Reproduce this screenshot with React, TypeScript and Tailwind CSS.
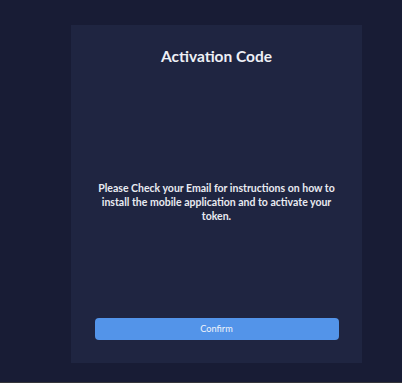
export default function App() {
  return (
    <div className="flex h-[383px] w-[402px] flex-col bg-[#181c35] font-['Lato',sans-serif]">
      <div className="flex flex-1 justify-start pl-[71px] pt-[25px]">
        {/* Card */}
        <div className="flex h-[338px] w-[291px] flex-col items-center bg-[#1f2541] px-4">
          <h1 className="mt-[20px] text-[15.5px] font-bold text-[#eef0f6]">Activation Code</h1>
          <p className="mt-[113px] text-center text-[10.5px] font-bold leading-[14px] text-[#e9ebf1]">
            Please Check your Email for instructions on how to install the mobile application and to activate your token.
          </p>
          <button className="mt-auto mb-[23px] h-[22px] w-[244px] rounded-[4px] bg-[#5394e9] text-[9.2px] text-[#eef3fb]">
            Confirm
          </button>
        </div>
      </div>
      <div className="h-px bg-[#35353a]" />
    </div>
  );
}
